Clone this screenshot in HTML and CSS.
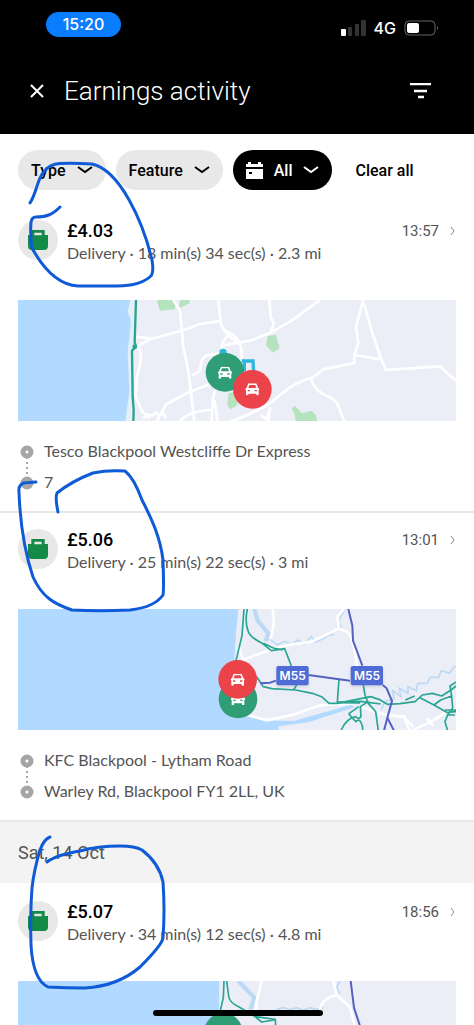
FILE: index.html
```html
<!DOCTYPE html>
<html lang="en">
<head>
  <meta charset="UTF-8" />
  <meta name="viewport" content="width=device-width, initial-scale=1" />
  <title>Earnings activity</title>
  <link rel="stylesheet" href="styles.css">
</head>
<body>

  <!-- shared icons -->
  <svg class="sprite" aria-hidden="true">
    <symbol id="bag" viewBox="0 0 60 60">
      <path fill="#138a46" fill-rule="evenodd" d="M10 0h40v15h10v33q0 12-12 12H12Q0 60 0 48V15h10zM19 8v8h22V8z"/>
    </symbol>
    <symbol id="chevron" viewBox="0 0 16 10">
      <path d="M1 2l7 5 7-5" fill="none" stroke="currentColor" stroke-width="2"/>
    </symbol>
    <symbol id="arrow" viewBox="0 0 6 10">
      <path d="M1 1l3 4-3 4" fill="none" stroke="#8a8a8a" stroke-width="1"/>
    </symbol>
    <symbol id="car" viewBox="0 0 42 36">
      <path fill="#fff" fill-rule="evenodd" d="M9 0h24l5 13 4 3v4h-2v16h-7v-5H9v5H2V20H0v-4l4-3zM12 5l-3 9h24l-3-9zM7 20v4h7v-4zM28 20v4h7v-4z"/>
    </symbol>
    <symbol id="route" viewBox="0 0 14 46">
      <path d="M7 12v22" stroke="#a6a6a6" stroke-width="2" stroke-dasharray="2 3"/>
      <circle cx="7" cy="7" r="4" fill="#fff" stroke="#a6a6a6" stroke-width="5"/>
      <circle cx="7" cy="38" r="4" fill="#fff" stroke="#a6a6a6" stroke-width="5"/>
    </symbol>
  </svg>

  <div class="screen">
    <header>
      <div class="status">
        <span class="clock">15:20</span>
        <div class="signals">
          <svg width="25" height="16" viewBox="0 0 25 16">
            <rect x="0" y="9" width="5" height="7" rx="1" fill="#fff"/>
            <rect x="7" y="7" width="4" height="9" rx="1" fill="#333"/>
            <rect x="14" y="4" width="4" height="12" rx="1" fill="#333"/>
            <rect x="20" y="0" width="5" height="16" rx="1" fill="#333"/>
          </svg>
          <span>4G</span>
          <svg width="35" height="16" viewBox="0 0 35 16">
            <rect x="1" y="1" width="30" height="14" rx="4" fill="none" stroke="#666"/>
            <rect x="3" y="3" width="12" height="10" rx="2" fill="#fff"/>
            <path d="M33 6q2 2 0 4z" fill="#777"/>
          </svg>
        </div>
      </div>
      <div class="title-bar">
        <button class="icon-btn" aria-label="Close">
          <svg width="14" height="14" viewBox="0 0 14 14"><path d="M1 1l12 12M13 1L1 13" stroke="#fff" stroke-width="2"/></svg>
        </button>
        <h1>Earnings activity</h1>
        <button class="icon-btn" aria-label="Filter">
          <svg width="21" height="16" viewBox="0 0 21 16"><path d="M0 1h21M4 8h13M8 14h6" stroke="#fff" stroke-width="2.5"/></svg>
        </button>
      </div>
    </header>

    <nav class="filters">
      <button class="chip">Type <svg width="16" height="10"><use href="#chevron"/></svg></button>
      <button class="chip">Feature <svg width="16" height="10"><use href="#chevron"/></svg></button>
      <button class="chip chip-dark">
        <svg width="17" height="17" viewBox="0 0 17 17">
          <path fill="#fff" fill-rule="evenodd" d="M0 2h2V0h3v2h7V0h3v2h2v3H0zM0 7h17v10H0zM3 10v2h3v-2z"/>
        </svg>
        All <svg width="16" height="10"><use href="#chevron"/></svg>
      </button>
      <button class="clear">Clear all</button>
    </nav>

    <main>
      <article class="trip">
        <div class="trip-head">
          <span class="badge"><svg width="20" height="20"><use href="#bag"/></svg></span>
          <div class="trip-info">
            <h2>£4.03</h2>
            <p>Delivery · 18 min(s) 34 sec(s) · 2.3 mi</p>
          </div>
          <a class="trip-time" href="#trip1">13:57 <svg width="6" height="10"><use href="#arrow"/></svg></a>
        </div>
        <svg class="map" viewBox="0 0 1314 363" preserveAspectRatio="xMidYMid slice">
          <path class="sea" d="M0 0H341L333 40L343 70L334 150L338 270L326 363H0z"/>
          <path d="M341 0l-8 35 8 20 1 20-9 80 5 120-12 88" class="shore"/>
          <g transform="translate(-54 -30)">
            <path class="park" d="M470 30h57l-2 28-45 4zM540 30h30l-2 10-31 15zM685 310l20-5 8 40-22 13-9-13z"/>
            <g class="road">
              <path d="M410 170l40-22 95-26 55-20 60-9q10 40 60 69M410 140l40 6M655 30l7 63M410 165q18 25 12 50l-12 50-3 55 20 45 22 20"/>
              <path d="M520 30l20 32 10 108 16 80 6 52 11 93M470 395l12-25 18-28 60-32 62-25 60-18"/>
              <path d="M575 255q28-7 27-24 0-40 40-38l24-6M665 180q0-35 25-45M540 392q30-30 95-32M635 395l3-65 7-30M652 395l-8-65"/>
              <path d="M430 385l14-12 12 4 12-10 8 12 14-10 8 16"/>
            </g>
            <path class="route" d="M408 30l-4 128 4 12-12 12 2 138 3 40-1 36"/>
            <circle cx="404" cy="170" r="7" fill="#2aa493"/>
            <circle cx="669" cy="187" r="11" fill="#2bb5d8"/>
          </g>
          <g transform="translate(636 -30)">
            <path class="park" d="M113 138l25-3 11 40-21 13-20-23zM185 355l10-7 21 22 29-8 12 12 5 21h-64l-4-19z"/>
            <g class="road">
              <path d="M-20 166l80-14 62-24 60-34 88-64M-20 120q58 20 55 80v20M118 30l4 50 9 20-9 28"/>
              <path d="M400 30l-22 80 7 50-12 35v24l-93 19-32 25q-40 10-70 30l-65 52q-45 25-112 50M402 40l22 80 27 80 17 40 162-11 48 43M375 195l75 13M243 265q5 28 37 48 38 15 45 35l18 47M92 375l18 12 10-32-5 40"/>
            </g>
            <path d="M35 213h34l2 35M43 213v30" fill="none" stroke="#2fb6df" stroke-width="10"/>
          </g>
          <circle cx="621" cy="217" r="58" fill="#2f9e77"/>
          <use href="#car" x="600" y="200" width="42" height="36"/>
          <circle cx="703" cy="268" r="58" fill="#ec4249"/>
          <use href="#car" x="682" y="250" width="42" height="36"/>
        </svg>
        <div class="stops">
          <svg width="14" height="46"><use href="#route"/></svg>
          <ul>
            <li>Tesco Blackpool Westcliffe Dr Express</li>
            <li>7</li>
          </ul>
        </div>
      </article>

      <article class="trip">
        <div class="trip-head">
          <span class="badge"><svg width="20" height="20"><use href="#bag"/></svg></span>
          <div class="trip-info">
            <h2>£5.06</h2>
            <p>Delivery · 25 min(s) 22 sec(s) · 3 mi</p>
          </div>
          <a class="trip-time" href="#trip2">13:01 <svg width="6" height="10"><use href="#arrow"/></svg></a>
        </div>
        <svg class="map" viewBox="0 0 1314 363" preserveAspectRatio="xMidYMid slice">
          <path class="sea" d="M0 0H661L655 60L648 170L690 320L740 335L830 335L1000 287L1010 295L870 340L782 352V363H0z"/>
          <g transform="translate(606 -27)">
            <path class="river" d="M103 27l10 35 32 38-8 24" stroke-width="13"/>
            <path class="river" d="M150 118l22 16 22-10 20 10 20-14 18 12 22-22 12 16 24-10 18-12 15 0M375 27l-20 35 10 25M484 330l10-25 28-8-4-25 25 18-5-25 26 15 0-20 25 12 4-22 28 0 10-18 25 0 8-20 25 8 12-18 30-10" stroke-width="5"/>
            <g class="road">
              <path d="M158 27l4 40-10 50M150 150l-50 18-30 12-15-40M150 150l55-15 70-10 42-20 40-20 30 14 14 35 10 65M357 85l-5-35 20-23"/>
              <path d="M80 345l60 16 80-17 80-28 100-6M420 320l80 25 50 5 30 30M575 392l60-28 60-38M620 355l20 22M550 345l18 45"/>
            </g>
            <g class="route thin">
              <path d="M72 27l-6 80-18 75M82 27q-8 40 2 65 6 20 40 36l30 24 40-6 20 52M130 130l30 14 28 6M110 230l20 30 25 6 72 4 50 10 28 10 22 20h25l70-14 30-6 25 8 25 15 38-2 45-6 22-20 30-5 28 8 28-18 35-27 20-5"/>
              <path d="M357 238l-5 68 70-2 60 8M430 255l5 30 10 25 22 25 8 57M445 305l-24 15 2 30-15 15q-25-25-20-25l28-20M408 350q-30 5-45 42M408 350q22 18 20 42M350 308l70 1M556 300l28-12M600 293l42 22 20-15 33-12-5-30 18-12M642 315l38 22 28-2M695 288l3 35-15 22-8 20 8 27M220 270l10-15M675 330h33M680 345h25"/>
            </g>
            <path class="motorway" d="M385 27l12 50 2 45 28 75M120 250l30-2 18-6M265 225l125 17M488 255l12 10 16 38-14 50 20 39M502 353l-10 39"/>
            <g filter="drop-shadow(0 5px 4px #8884)">
              <rect x="169" y="198" width="97" height="58" rx="6" fill="#4f6bd5"/>
              <rect x="392" y="198" width="97" height="58" rx="6" fill="#4f6bd5"/>
            </g>
            <g class="sign">
              <text x="218" y="241">M55</text>
              <text x="441" y="241">M55</text>
            </g>
          </g>
          <circle cx="660" cy="270" r="58" fill="#2f9e77"/>
          <use href="#car" x="639" y="252" width="42" height="36"/>
          <circle cx="659" cy="211" r="58" fill="#ec4249"/>
          <use href="#car" x="638" y="194" width="42" height="36"/>
        </svg>
        <div class="stops">
          <svg width="14" height="46"><use href="#route"/></svg>
          <ul>
            <li>KFC Blackpool - Lytham Road</li>
            <li>Warley Rd, Blackpool FY1 2LL, UK</li>
          </ul>
        </div>
      </article>

      <h3 class="day">Sat, 14 Oct</h3>

      <article class="trip">
        <div class="trip-head">
          <span class="badge"><svg width="20" height="20"><use href="#bag"/></svg></span>
          <div class="trip-info">
            <h2>£5.07</h2>
            <p>Delivery · 34 min(s) 12 sec(s) · 4.8 mi</p>
          </div>
          <a class="trip-time" href="#trip3">18:56 <svg width="6" height="10"><use href="#arrow"/></svg></a>
        </div>
        <svg class="map" viewBox="0 0 1314 363" preserveAspectRatio="xMidYMid slice">
          <path class="sea" d="M0 0H604L600 363H0z"/>
          <g transform="translate(-54 -302)">
            <path class="river" d="M715 302l48 50-12 35" stroke-width="13"/>
            <path class="river" d="M830 388l20-6 20 6 20-6 20 8 20-8 20 6 20-6M1020 302l-10 18 10 20" stroke-width="5"/>
            <path class="road" d="M785 302l-15 60-5 50M1000 302l10 42q-45 10-50 45M1010 344l40 36 15 60"/>
            <path class="route thin" d="M672 302l-2 50-14 60M680 302l6 45q2 20 30 32l50 30 60 8 2 40M760 405l25 20 38-6"/>
            <path class="motorway" d="M1052 302l10 80 18 55"/>
          </g>
          <circle cx="616" cy="154" r="58" fill="#2f9e77"/>
          <use href="#car" x="595" y="137" width="42" height="36"/>
        </svg>
      </article>
    </main>

    <!-- pen marks drawn over the list -->
    <svg class="ink" width="474" height="1025" viewBox="0 0 474 1025" aria-hidden="true">
      <path d="M30 203C37 192 37 180 43 173Q49 164 60 163.500Q75 163 92 164C120 170 143 222 152 260Q154 272 151 276C140 286 125 286 110 286H78C60 285 44 270 32 248Q30 235 31 222Q32 217 36 217C46 217 52 215 60 207"/>
      <path d="M36 482L24 483Q18 485 19 492C20 520 24 550 33 577C42 597 54 604 72 610C90 611 110 611 130 610C148 608 158 602 163 595Q164 590 163 560C160 535 150 516 142 500Q134 478 125 471C110 470 102 471 93 473Q72 481 57 493Q55 498 58 512"/>
      <path d="M50 837Q44 839 40 850Q34 870 32 888Q30 915 31 945Q33 980 48 987Q65 988 85 988Q118 986 140 967Q162 945 163 938Q165 910 163 882Q159 863 142 850Q135 846 120 846Q98 846 80 851Q56 855 47 862"/>
    </svg>
    <div class="home-bar"></div>
  </div>

</body>
</html>
```

FILE: styles.css
```css
* {
  margin: 0;
  padding: 0;
  box-sizing: border-box;
}
body {
  font-family: Roboto, "Liberation Sans", sans-serif;
  font-size: 16px;
  color: #545454;
  background: #fff;
}
button {
  font: inherit;
  color: inherit;
  background: none;
  border: none;
  cursor: pointer;
}
svg {
  display: block;
  flex-shrink: 0;
}
.sprite {
  position: absolute;
  width: 0;
  height: 0;
}
.screen {
  position: relative;
  height: 100vh;
  overflow: hidden;
}

/* header */
header {
  background: #000;
  color: #fff;
  padding: 12px 35px 16px 22px;
}
.status {
  display: flex;
  justify-content: space-between;
  height: 52px;
  padding-left: 24px;
}
.clock {
  width: 75px;
  height: 25px;
  border-radius: 13px;
  background: #0a7dff;
  font-family: Inter, sans-serif;
  font-weight: 500;
  line-height: 25px;
  text-align: center;
}
.signals {
  display: flex;
  align-items: center;
  gap: 8px;
  height: 32px;
  font-family: Inter, sans-serif;
  font-weight: 500;
}
.title-bar {
  display: flex;
  align-items: center;
  height: 54px;
}
.icon-btn {
  padding: 8px;
}
h1 {
  flex: 1;
  margin-left: 12px;
  font-size: 26px;
  font-weight: 300;
}

/* filter chips */
.filters {
  display: flex;
  gap: 10px;
  padding: 16px 18px 14px;
}
.chip {
  display: flex;
  align-items: center;
  gap: 11px;
  height: 40px;
  padding: 0 13px;
  border-radius: 20px;
  background: #e8e8e8;
  color: #000;
  font-weight: 500;
}
.chip-dark {
  background: #000;
  color: #fff;
}
.clear {
  margin-left: 13px;
  color: #000;
  font-weight: 500;
}

/* trips */
.trip {
  padding: 16px 18px 14px;
  border-bottom: 2px solid #e8e8e8;
}
.trip-head {
  display: flex;
  margin-bottom: 40px;
  height: 40px;
}
.badge {
  display: flex;
  align-items: center;
  justify-content: center;
  width: 40px;
  height: 40px;
  margin-right: 9px;
  border-radius: 50%;
  background: #e8e8e8;
}
.trip-info {
  flex: 1;
}
h2 {
  color: #000;
  font-size: 18px;
  font-weight: 500;
  line-height: 22px;
}
.trip-info p,
.stops li {
  font-family: Lato, sans-serif;
}
.trip-info p {
  line-height: 22px;
}
.trip-time {
  display: flex;
  align-items: center;
  gap: 11px;
  height: 22px;
  color: inherit;
  font-size: 15px;
  text-decoration: none;
}
.stops {
  display: flex;
  gap: 10px;
  padding: 14px 2px 0;
}
.stops svg {
  margin-top: 10px;
}
.stops ul {
  list-style: none;
}
.stops li {
  line-height: 31px;
}
.day {
  margin-bottom: 2px;
  padding-left: 18px;
  background: #f3f3f3;
  font-size: 18px;
  font-weight: 400;
  line-height: 61px;
}

/* maps */
.map {
  width: 100%;
  background: #ebeef7;
}
.sea {
  fill: #b2d9ff;
}
.shore {
  fill: none;
  stroke: #e0f1fa;
  stroke-width: 8;
}
.park {
  fill: #b4e3be;
}
.river {
  fill: none;
  stroke: #bcd9f5;
}
.road {
  fill: none;
  stroke: #fff;
  stroke-width: 8;
  stroke-linejoin: round;
}
.route {
  fill: none;
  stroke: #2aa493;
  stroke-width: 7;
  stroke-linejoin: round;
}
.thin {
  stroke-width: 5;
}
.motorway {
  fill: none;
  stroke: #5561c0;
  stroke-width: 6;
}
.sign {
  fill: #fff;
  font-family: Inter, sans-serif;
  font-size: 36px;
  font-weight: 600;
  text-anchor: middle;
}

/* overlays */
.ink {
  position: absolute;
  top: 0;
  left: 0;
  fill: none;
  stroke: #0f5bd7;
  stroke-width: 3;
  stroke-linecap: round;
  pointer-events: none;
}
.home-bar {
  position: absolute;
  bottom: 9px;
  left: 50%;
  width: 170px;
  height: 6px;
  margin-left: -84px;
  border-radius: 3px;
  background: #000;
}
```
